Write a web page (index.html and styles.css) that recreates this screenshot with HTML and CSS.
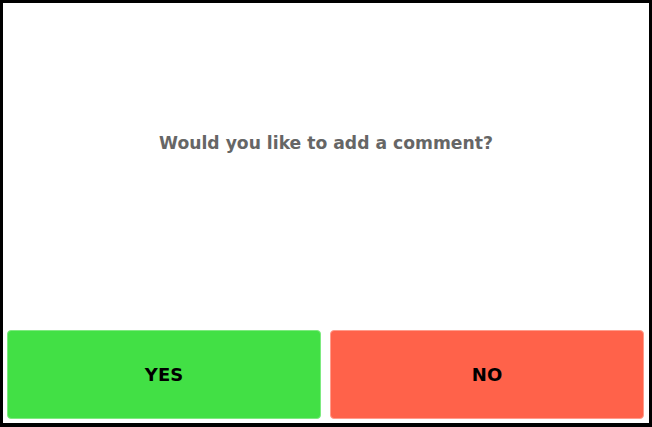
FILE: index.html
```html
<!DOCTYPE html>
<html>

<head>
  <title>Comment prompt</title>
  <link rel="stylesheet" href="styles.css">
</head>

<body>
  <div class="screen">
    <div class="question">
      <h1>Would you like to add a comment?</h1>
    </div>
    <div class="actions">
      <button class="btn btn-yes">YES</button>
      <button class="btn btn-no">NO</button>
    </div>
  </div>
</body>

</html>
```

FILE: styles.css
```css
html,
body {
  margin: 0;
  padding: 0;
  background: #fff;
}

.screen {
  width: 652px;
  height: 427px;
  box-sizing: border-box;
  border: 3px solid #000;
  border-bottom-width: 4px;
  display: flex;
  flex-direction: column;
  font-family: "DejaVu Sans", Verdana, sans-serif;
}

.question {
  flex: 1;
  display: flex;
  align-items: center;
  justify-content: center;
  padding-bottom: 47px;
}

h1 {
  margin: 0;
  font-size: 17.2px;
  font-weight: bold;
  color: #666;
}

.actions {
  display: flex;
  gap: 9px;
  padding: 0 5px 4px 4px;
}

.btn {
  flex: 1;
  height: 89px;
  border-radius: 4px;
  font-family: inherit;
  font-size: 18px;
  font-weight: bold;
  color: #000;
  cursor: pointer;
}

.btn-yes {
  background-color: #42e045;
  border: 1px solid #7eea80;
}

.btn-no {
  background-color: #ff624a;
  border: 1px solid #ff9c8c;
}
```
